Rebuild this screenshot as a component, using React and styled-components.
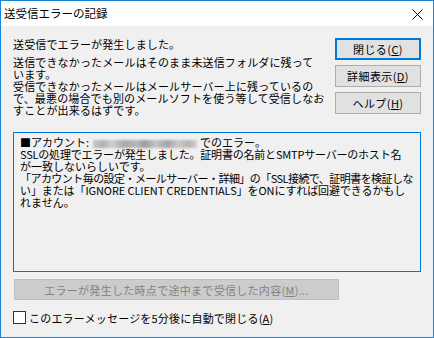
import styled, { createGlobalStyle } from "styled-components";

const GlobalStyle = createGlobalStyle`
    html, body {
        margin: 0;
        padding: 0;
        background: #ffffff;
    }
    body {
        font-family: "Noto Sans CJK JP", "Noto Sans", sans-serif;
        font-size: 11px;
        color: #000;
    }
`;

const Window = styled.div`
    width: 434px;
    height: 338px;
    box-sizing: border-box;
    border: 1px solid #1883d7;
    display: flex;
    flex-direction: column;
    background: #f0f0f0;
`;

const TitleBar = styled.div`
    height: 25px;
    background: #ffffff;
    display: flex;
    align-items: center;
    justify-content: space-between;
    padding: 0 10px 0 3px;
    flex-shrink: 0;
`;

const Title = styled.span`
    font-size: 11.5px;
    line-height: 12px;
    margin-top: -1px;
`;

const CloseIcon = styled.svg`
    width: 11px;
    height: 11px;
    margin-top: 1px;
`;

const Body = styled.div`
    flex: 1;
    display: flex;
    flex-direction: column;
    padding: 12px 12px 0 12px;
`;

const TopRow = styled.div`
    display: flex;
    justify-content: space-between;
`;

const Message = styled.div`
    display: flex;
    flex-direction: column;
    gap: 6px;
    line-height: 12px;
    letter-spacing: 0.15px;
    white-space: nowrap;
`;

const ButtonColumn = styled.div`
    display: flex;
    flex-direction: column;
    gap: 5px;
`;

const Button = styled.button`
    width: 86px;
    height: 22px;
    box-sizing: border-box;
    background: #e1e1e1;
    border: ${(p) => (p.$focused ? "2px solid #0078d7" : "1px solid #adadad")};
    font-family: inherit;
    font-size: 11px;
    color: #000;
    padding: 0;
    line-height: 12px;
    letter-spacing: 0.4px;

    u {
        text-underline-offset: 1px;
    }
`;

const DetailBox = styled.div`
    margin-top: 16px;
    height: 140px;
    box-sizing: border-box;
    border: 1px solid #0078d7;
    background: #f0f0f0;
    padding: 3px 0 3px 6px;
    line-height: 12px;
    white-space: nowrap;
    overflow: hidden;
`;

const Line = styled.div`
    letter-spacing: ${(p) => p.$spacing || "0"};
`;

const Blurred = styled.span`
    display: inline-block;
    width: 104px;
    height: 8px;
    vertical-align: -1px;
    margin: 0 3px 0 4px;
    background: linear-gradient(90deg, #c8c8c8 0%, #b0b0b0 10%, #d0d0d0 18%, #a8a8a8 30%, #b8b8b8 42%, #9a9a9a 50%, #c4c4c4 60%, #a4a4a4 72%, #cacaca 82%, #b4b4b4 92%, #d4d4d4 100%);
    filter: blur(1.2px);
`;

const WideButton = styled.button`
    margin: 7px 0 0 1px;
    width: 325px;
    height: 21px;
    box-sizing: border-box;
    background: #cccccc;
    border: 1px solid #bfbfbf;
    color: #838383;
    font-family: inherit;
    font-size: 11px;
    padding: 0;
    line-height: 12px;
    letter-spacing: 0.3px;
`;

const CheckRow = styled.label`
    margin-top: 11px;
    display: flex;
    align-items: center;
    gap: 3px;
    line-height: 12px;
    letter-spacing: 0.2px;
`;

const CheckBox = styled.span`
    width: 13px;
    height: 13px;
    box-sizing: border-box;
    border: 1px solid #333333;
    background: #ffffff;
    flex-shrink: 0;
`;

function App() {
    return (
        <>
            <GlobalStyle />
            <Window>
                <TitleBar>
                    <Title>送受信エラーの記録</Title>
                    <CloseIcon viewBox="0 0 11 11">
                        <path d="M0.5 0.5 L10.5 10.5 M10.5 0.5 L0.5 10.5" stroke="#000" strokeWidth="1" fill="none" />
                    </CloseIcon>
                </TitleBar>
                <Body>
                    <TopRow>
                        <Message>
                            <span>送受信でエラーが発生しました。</span>
                            <span>
                                送信できなかったメールはそのまま未送信フォルダに残って<br />
                                います。<br />
                                受信できなかったメールはメールサーバー上に残っているの<br />
                                で、最悪の場合でも別のメールソフトを使う等して受信しなお<br />
                                すことが出来るはずです。
                            </span>
                        </Message>
                        <ButtonColumn>
                            <Button $focused>閉じる(<u>C</u>)</Button>
                            <Button>詳細表示(<u>D</u>)</Button>
                            <Button>ヘルプ(<u>H</u>)</Button>
                        </ButtonColumn>
                    </TopRow>
                    <DetailBox>
                        <Line>■アカウント:<Blurred />でのエラー。</Line>
                        <Line $spacing="-0.2px">SSLの処理でエラーが発生しました。証明書の名前とSMTPサーバーのホスト名</Line>
                        <Line>が一致しないらしいです。</Line>
                        <Line $spacing="-0.55px">「アカウント毎の設定・メールサーバー・詳細」の「SSL接続で、証明書を検証しな</Line>
                        <Line $spacing="-0.1px">い」または「IGNORE CLIENT CREDENTIALS」をONにすれば回避できるかもし</Line>
                        <Line>れません。</Line>
                    </DetailBox>
                    <WideButton disabled>エラーが発生した時点で途中まで受信した内容(<u>M</u>)...</WideButton>
                    <CheckRow>
                        <CheckBox />
                        <span>このエラーメッセージを5分後に自動で閉じる(<u>A</u>)</span>
                    </CheckRow>
                </Body>
            </Window>
        </>
    );
}

export default App;
